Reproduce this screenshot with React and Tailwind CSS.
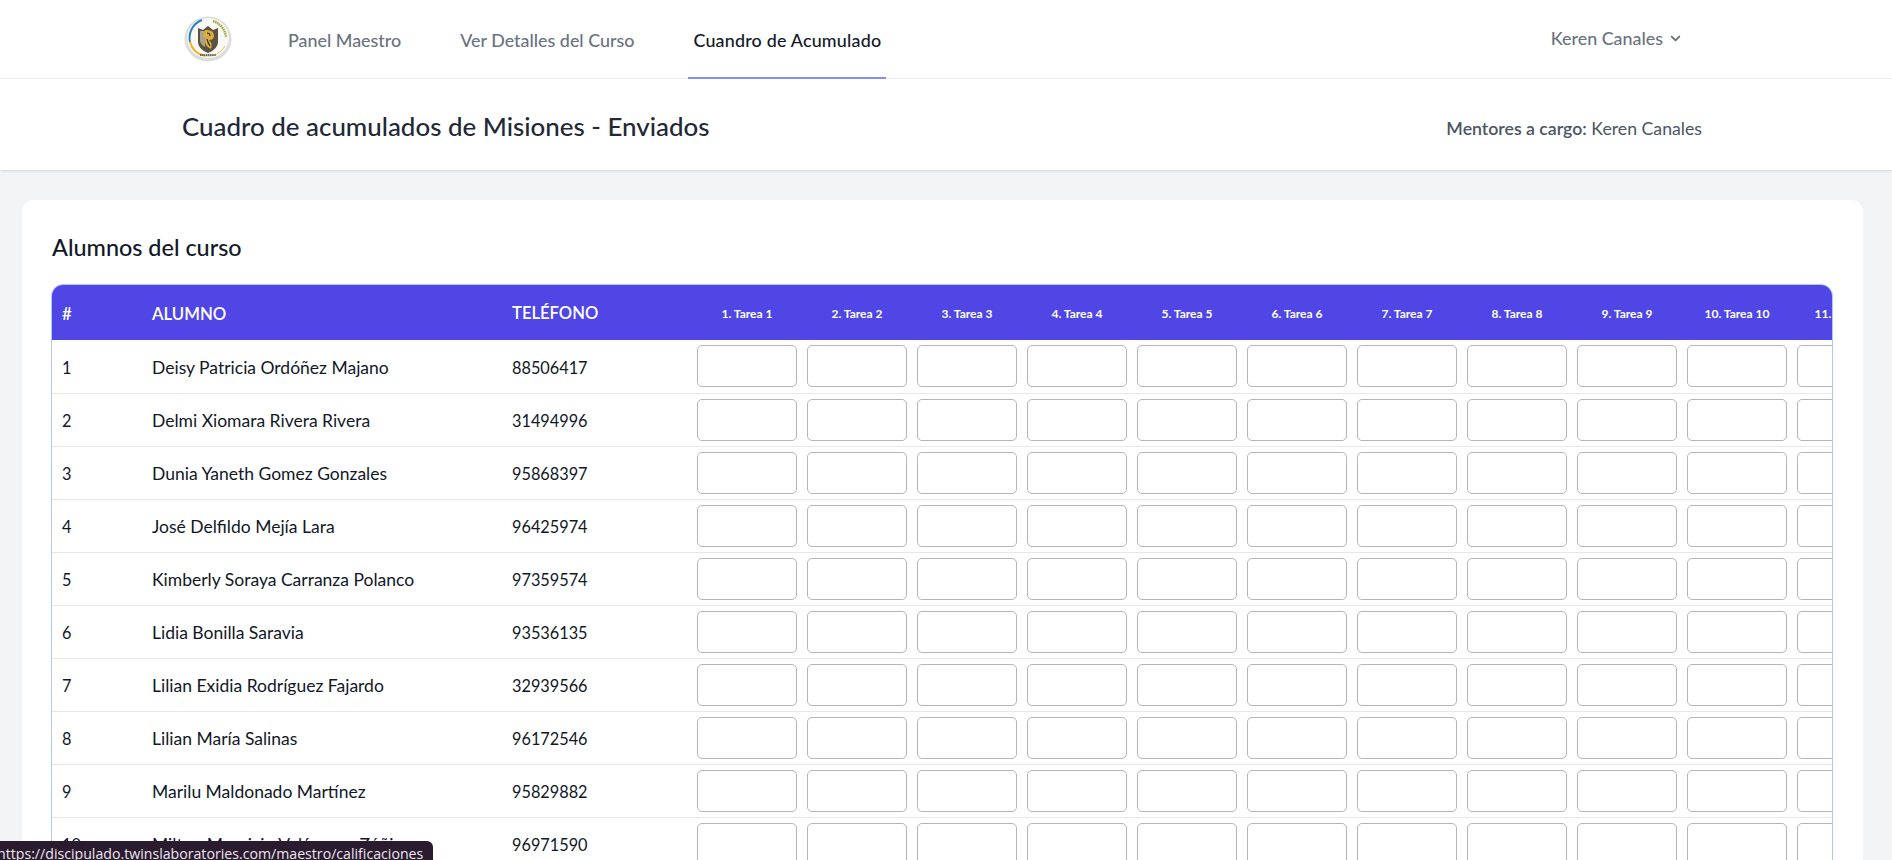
import React from "react";

const students = [
  ["Deisy Patricia Ordóñez Majano", "88506417"],
  ["Delmi Xiomara Rivera Rivera", "31494996"],
  ["Dunia Yaneth Gomez Gonzales", "95868397"],
  ["José Delfildo Mejía Lara", "96425974"],
  ["Kimberly Soraya Carranza Polanco", "97359574"],
  ["Lidia Bonilla Saravia", "93536135"],
  ["Lilian Exidia Rodríguez Fajardo", "32939566"],
  ["Lilian María Salinas", "96172546"],
  ["Marilu Maldonado Martínez", "95829882"],
  ["Milton Mauricio Velásquez Zúñiga", "96971590"],
];

const tasks = Array.from({ length: 12 }, (_, i) => i + 1);

function Logo() {
  return (
    <svg viewBox="0 0 50 48" className="h-[48px] w-[50px] shrink-0 blur-[0.5px]">
      <ellipse cx="25" cy="24" rx="23.5" ry="22.5" fill="#dcdcda" />
      <ellipse cx="25" cy="23" rx="21" ry="20" fill="#f8f8f4" />
      <path d="M19 5 A19 19 0 0 0 7 27" fill="none" stroke="#2f7fc1" strokeWidth="2" />
      <path d="M7 27 A19 19 0 0 0 22 41" fill="none" stroke="#f0b429" strokeWidth="2" />
      <path d="M22 41 A19 19 0 0 0 42 31" fill="none" stroke="#e8c65a" strokeWidth="1" />
      <path d="M30 6 A19 19 0 0 1 43 22" fill="none" stroke="#a3a83a" strokeWidth="2.4" strokeDasharray="1.6 0.6" />
      <path d="M15 13 L20 15 L25 11 L30 15 L35 13 L35 27 Q35 34 25 38 Q15 34 15 27 Z" fill="#5b5140" />
      <path d="M17 16 L22 16 L22 32 Q18 30 17 26 Z" fill="#a9a28c" />
      <path d="M22 15 Q31 14 31 21 Q31 25 26 25 Q30 28 28 34 Q21 31 22 24 Q19 20 22 15 Z" fill="#d9ad3c" />
      <path d="M24 18 Q27 18 27 21 M24 24 Q25 28 27 31" fill="none" stroke="#2f2818" strokeWidth="1.1" />
      <path d="M17 40 H33" stroke="#3a4450" strokeWidth="1.4" strokeDasharray="1.4 0.5" />
    </svg>
  );
}

function NavLink({ children, active }) {
  return (
    <a
      href="#"
      className={
        "flex h-[79px] items-center border-b-2 px-[5px] pt-[4px] text-[17.9px] font-medium " +
        (active ? "border-[#818cf8] tracking-[0.2px] text-[#111827]" : "border-transparent text-[#6b7280]")
      }
    >
      {children}
    </a>
  );
}

export default function App() {
  return (
    <div className="relative h-[860px] overflow-hidden bg-[#f3f4f6] font-['Lato',sans-serif] text-[#111827]">
      <nav className="h-[79px] border-b border-[#f0f1f3] bg-white">
        <div className="mx-auto flex w-[1536px] justify-between pl-[5px] pr-[29px]">
          <div className="flex gap-[49px]">
            <div className="mr-[1px] flex h-[78px] items-center">
              <Logo />
            </div>
            <NavLink>Panel Maestro</NavLink>
            <NavLink>Ver Detalles del Curso</NavLink>
            <NavLink active>Cuandro de Acumulado</NavLink>
          </div>
          <div className="flex h-[77px] items-center gap-[3px] text-[17.9px] font-medium text-[#6b7280]">
            Keren Canales
            <svg viewBox="0 0 20 20" fill="currentColor" className="h-[19px] w-[19px]">
              <path
                fillRule="evenodd"
                clipRule="evenodd"
                d="M5.293 7.293a1 1 0 011.414 0L10 10.586l3.293-3.293a1 1 0 111.414 1.414l-4 4a1 1 0 01-1.414 0l-4-4a1 1 0 010-1.414z"
              />
            </svg>
          </div>
        </div>
      </nav>

      <header className="h-[91px] bg-white shadow">
        <div className="mx-auto flex h-full w-[1536px] items-center justify-between pl-[4px] pr-[12px] pt-[3px]">
          <h1 className="text-[25.9px] font-medium text-[#1f2937]">
            Cuadro de acumulados de Misiones - Enviados
          </h1>
          <p className="pt-[6px] text-[17.7px] text-[#4b5563]">
            <span className="font-semibold">Mentores a cargo:</span> Keren Canales
          </p>
        </div>
      </header>

      <main className="pl-[22px] pr-[29px] pt-[30px]">
        <div className="rounded-[12px] bg-white pl-[29px] pr-[30px] pt-[33px] pb-[30px]">
          <h2 className="mb-[22px] pl-[1px] text-[23.4px] leading-[29px] font-medium text-[#111827]">
            Alumnos del curso
          </h2>
          <div className="overflow-hidden rounded-[12px] border border-[#a9c9fb]">
            <table className="w-[1960px] table-fixed border-collapse">
              <thead>
                <tr className="h-[55px] bg-[#4f46e5] text-white">
                  <th className="w-[90px] pl-[10px] pt-[2px] text-left text-[16.8px] font-semibold">#</th>
                  <th className="w-[360px] pl-[10px] pt-[2px] text-left text-[16.8px] font-semibold">ALUMNO</th>
                  <th className="w-[190px] pl-[10px] pt-[2px] text-left text-[16.6px] font-semibold">TELÉFONO</th>
                  {tasks.map((t) => (
                    <th key={t} className="w-[110px] pt-[2px] text-center text-[12px] font-bold whitespace-nowrap">
                      {t}. Tarea {t}
                    </th>
                  ))}
                </tr>
              </thead>
              <tbody>
                {students.map(([name, phone], i) => (
                  <tr key={phone} className="h-[53px] border-b border-[#e5e7eb] text-[17.5px]">
                    <td className="pl-[10px] pt-[3px] text-[16.3px]">{i + 1}</td>
                    <td className="pl-[10px] pt-[3px]">{name}</td>
                    <td className="pl-[10px] pt-[3px] text-[16.3px]">{phone}</td>
                    {tasks.map((t) => (
                      <td key={t} className="px-[5px]">
                        <input
                          type="text"
                          className="block h-[42px] w-full rounded-[5px] border border-[#b4b4bc] bg-white"
                        />
                      </td>
                    ))}
                  </tr>
                ))}
              </tbody>
            </table>
          </div>
        </div>
      </main>

      {/* browser status bubble */}
      <div className="absolute bottom-0 left-0 h-[19px] w-[433px] overflow-hidden whitespace-nowrap rounded-tr-[6px] bg-[#2a1b2e] pt-[3px] font-['Open_Sans',sans-serif] text-[14.15px] leading-[20px] text-[#ece6ee]">
        <span className="-ml-[3px] block">https://discipulado.twinslaboratories.com/maestro/calificaciones</span>
      </div>
    </div>
  );
}
